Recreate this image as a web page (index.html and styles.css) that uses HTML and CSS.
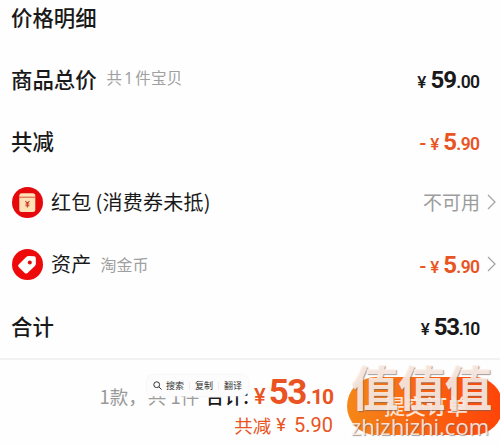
FILE: index.html
```html
<!DOCTYPE html>
<html lang="zh-CN">
<head>
<meta charset="utf-8">
<title>价格明细</title>
<link rel="stylesheet" href="styles.css">
</head>
<body>
<main class="details">
  <h1 class="title strong">价格明细</h1>
  <div class="row"><span class="strong">商品总价</span><span class="note">共<span class="num">1</span>件宝贝</span>
    <span class="price"><span class="yen">¥</span><span class="whole">59</span><span class="cents">.00</span></span></div>
  <div class="row"><span class="strong">共减</span>
    <span class="price orange"><span class="minus">-</span><span class="yen">¥</span><span class="whole">5</span><span class="cents">.90</span></span></div>
  <div class="row">
    <svg class="icon" viewBox="0 0 31 31"><circle cx="15.5" cy="15.5" r="15.5" fill="#e5090c"/><rect x="7.3" y="6.3" width="16" height="18.8" rx="2.5" fill="#ffe2b8"/><path d="M7.3 10.2h16" stroke="#d94b32" stroke-width="1"/><path d="M13.4 14l2 2.4 2-2.4M15.4 16.4v4.2M13.4 17h4M13.4 18.8h4" fill="none" stroke="#c93b23" stroke-width="1.1"/></svg>
    <span class="label">红包<span class="paren">(</span>消费券未抵<span>)</span></span>
    <span class="unavailable">不可用</span>
    <svg class="chevron" viewBox="0 0 9 16"><path d="M1 1l7 7-7 7"/></svg>
  </div>
  <div class="row">
    <svg class="icon" viewBox="0 0 31 31"><circle cx="15.5" cy="15.5" r="15.5" fill="#ee090b"/><path d="M6.7 15.5l7.5-7.5q1-1 2.5-1l5.5.3q1.5.1 1.6 1.6l.1 5.6q0 1.4-1 2.4L15.5 24q-1.4 1.2-2.8 0l-6-6q-1.2-1.2 0-2.5z" fill="#fff"/><circle cx="17.8" cy="13.4" r="2" fill="#df0a0b"/></svg>
    <span class="label">资产</span><span class="note coin">淘金币</span>
    <span class="price orange with-arrow"><span class="minus">-</span><span class="yen">¥</span><span class="whole">5</span><span class="cents">.90</span></span>
    <svg class="chevron" viewBox="0 0 9 16"><path d="M1 1l7 7-7 7"/></svg>
  </div>
  <div class="row"><span class="strong">合计</span>
    <span class="price last"><span class="yen">¥</span><span class="whole">53</span><span class="cents">.10</span></span></div>
</main>
<footer class="bar">
  <div class="summary">
    <div class="total"><span class="count">1款，</span><span class="count pieces">共 1件</span><span class="sum">合计:</span><span class="big"><span class="yen">¥</span><span class="whole">53</span><span class="cents">.10</span></span></div>
    <div class="saved">共减<span class="saved-yen">¥</span><span class="saved-num">5.90</span></div>
  </div>
  <div class="submit">提交订单</div>
  <div class="menu"><svg viewBox="0 0 9 9"><circle cx="3.7" cy="3.7" r="2.9"/><path d="M5.9 5.9l2.6 2.6"/></svg><span>搜索</span><i></i><span>复制</span><i></i><span>翻译</span></div>
  <div class="watermark"><div class="mark">值值值</div><div class="site">zhizhizhi.com</div></div>
</footer>
</body>
</html>
```

FILE: styles.css
```css
* { box-sizing: border-box; }
body {
  margin: 0; width: 500px; height: 445px; overflow: hidden;
  background: #fefefe; color: #191919;
  font-family: "Noto Sans CJK SC", sans-serif; white-space: nowrap;
}
.details { height: 358px; padding-left: 11px; }
.title { margin: 0; height: 48px; padding-top: 2px; line-height: 30px; }
.strong { font-size: 21.4px; font-weight: 500; }
.row { height: 61.8px; display: flex; align-items: center; line-height: 30px; padding-right: 4px; }
.note { margin-left: 10px; font-size: 15.5px; color: #a0a0a0; letter-spacing: .2px; position: relative; top: -1px; }
.num { margin: 0 2px; font-family: "Noto Sans", sans-serif; }
.coin { font-size: 16px; letter-spacing: 0; margin-left: 9px; top: 0; }
.icon { width: 31px; height: 31px; margin: 0 8px 0 1px; flex: none; }
.label { font-size: 20px; letter-spacing: .25px; }
.paren { margin-left: 4px; }
.unavailable { margin-left: auto; margin-right: 7px; font-size: 19px; color: #9c9c9c; }
.chevron { width: 9px; height: 16px; fill: none; stroke: #a5a5a5; stroke-width: 1.3; flex: none; }
.price {
  margin-left: auto; margin-right: 16.5px; padding-top: 4px; display: flex; align-items: baseline;
  font-family: Roboto, sans-serif; font-weight: 700;
}
.price.with-arrow { margin-right: 7.5px; }
.price.last .whole { letter-spacing: -1.3px; }
.price.last .cents { letter-spacing: -1.7px; margin-right: 1px; }
.orange, .big { color: #e95422; }
.yen { font-size: 17px; font-weight: 500; margin-right: 4px; }
.whole { font-size: 24px; letter-spacing: -.8px; }
.cents { font-size: 17.5px; letter-spacing: -.6px; font-weight: 600; }
.minus { font-size: 20px; font-weight: 500; margin-right: 4px; }
.bar {
  position: relative; height: 87px; border-top: 2px solid #f2f2f2;
  display: flex; padding-top: 17px;
}
.summary { width: 333px; flex: none; margin-top: -4px; }
.total { height: 40px; display: flex; align-items: baseline; justify-content: flex-end; line-height: 40px; }
.count { color: #999; font-size: 18.5px; }
.pieces { margin-left: 1px; margin-right: 6px; }
.sum { font-size: 19px; font-weight: 500; margin-right: 5px; }
.big { display: flex; align-items: baseline; font-family: Roboto, sans-serif; font-weight: 700; }
.big .yen { font-size: 22px; margin-right: 3px; }
.big .whole { font-size: 35px; letter-spacing: -1.5px; }
.big .cents { font-size: 21px; letter-spacing: -1px; font-weight: 700; }
.saved { height: 24px; line-height: 24px; display: flex; justify-content: flex-end; color: #e95422; font-size: 18.5px; }
.saved-yen { margin: 0 8px 0 5px; font-family: Roboto, sans-serif; }
.saved-num { font-family: Roboto, sans-serif; font-size: 20px; }
.submit {
  width: 156px; height: 58px; flex: none; margin-left: 14px; border-radius: 29px;
  background: linear-gradient(90deg, #f58718, #fb6010 55%, #ff4308);
  color: #ffe5d5; font-size: 21px; font-weight: 500; line-height: 57px; padding-left: 37px;
}
.menu {
  position: absolute; left: 147px; top: 15px; width: 101px; height: 21px;
  display: flex; align-items: center; justify-content: center; gap: 4px;
  border-radius: 6px; background: #fcfcfc; box-shadow: 0 0 3px #eee;
  color: #333; font-size: 9px; line-height: 20px;
}
.menu svg { width: 9px; height: 9px; fill: none; stroke: #333; stroke-width: 1; }
.menu i { width: 1px; height: 8px; margin: 0 1px; background: #eee; }
.watermark {
  position: absolute; left: 351px; top: 0; width: 149px; color: rgba(255,240,232,.9);
  text-shadow: 1px 1px 1px rgba(110,100,100,.65);
}
.mark { height: 54px; font-size: 47.5px; line-height: 51px; font-weight: 700; letter-spacing: -.6px; }
.site { font-family: "Open Sans", sans-serif; font-size: 22px; line-height: 24px; font-weight: 500; }
```
